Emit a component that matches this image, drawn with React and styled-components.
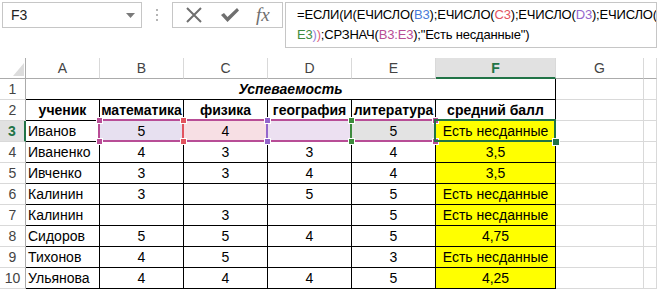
import styled, { createGlobalStyle } from 'styled-components';

const GRID = '#d9d9d9';
const HEAD_LINE = '#ababab';
const XL_GREEN = '#217346';
const ICON_GRAY = '#6f6f6f';

const COL_WIDTHS = [26, 74, 84, 84, 84, 84, 120, 88];
const COL_LETTERS = ['A', 'B', 'C', 'D', 'E', 'F', 'G'];
const ROW_H = 21;

// x of the line on the right of each column (0 = row header)
const EDGES = COL_WIDTHS.reduce((acc, w, i) => [...acc, (i ? acc[i - 1] + 1 : 0) + w - 1], []);
const rowEdge = r => (r + 1) * ROW_H - 1; // r = 0 -> header row

const HEADERS = ['ученик', 'математика', 'физика', 'география', 'литература', 'средний балл'];

const ROWS = [
	['Иванов', '5', '4', '', '5', 'Есть несданные'],
	['Иваненко', '4', '3', '3', '4', '3,5'],
	['Ивченко', '3', '3', '4', '4', '3,5'],
	['Калинин', '3', '', '5', '5', 'Есть несданные'],
	['Калинин', '', '3', '', '5', 'Есть несданные'],
	['Сидоров', '5', '5', '4', '5', '4,75'],
	['Тихонов', '4', '5', '', '3', 'Есть несданные'],
	['Ульянова', '4', '4', '4', '5', '4,25'],
];

// fills of the referenced cells in row 3 (B..E)
const REF_FILLS = ['#e7e0f0', '#f7dfe4', '#ece0f1', '#e3e3e3'];

const REFS = [
	{ from: 2, to: 2, color: '#4a7bd8' },
	{ from: 3, to: 3, color: '#e2545f' },
	{ from: 4, to: 4, color: '#9466cc' },
	{ from: 5, to: 5, color: '#3d8b3d' },
];
const RANGE = { from: 2, to: 5, color: '#b84d96' };

const GlobalStyle = createGlobalStyle`
	html, body {
		margin: 0;
		padding: 0;
		background: #fff;
	}
	body {
		font-family: 'Liberation Sans', Arial, sans-serif;
		overflow: hidden;
	}
`;

const Page = styled.div`
	width: 657px;
	height: 289px;
	overflow: hidden;
	background: #fff;
`;

const TopBar = styled.div`
	display: flex;
	align-items: flex-start;
	height: 58px;
	box-sizing: border-box;
	padding: 2px 0 0 2px;
`;

const NameBox = styled.div`
	box-sizing: border-box;
	width: 140px;
	height: 26px;
	border: 1px solid #c6c6c6;
	display: flex;
	align-items: center;
	justify-content: space-between;
	padding: 0 6px 0 8px;
	font-size: 14px;
	color: #222;
`;

const Grip = styled.div`
	width: 30px;
	height: 26px;
	display: flex;
	align-items: center;
	justify-content: center;
`;

const FxButtons = styled.div`
	box-sizing: border-box;
	width: 111px;
	height: 26px;
	border: 1px solid #c6c6c6;
	display: flex;
	align-items: center;
	justify-content: space-around;
	padding: 0 4px;
`;

const FxLabel = styled.span`
	font-family: 'Liberation Serif', 'Times New Roman', serif;
	font-style: italic;
	font-size: 19px;
	color: ${ICON_GRAY};
	line-height: 1;
	margin-top: -2px;
`;

const FormulaBox = styled.div`
	box-sizing: border-box;
	margin-left: 2px;
	width: 372px;
	height: 46px;
	border: 1px solid #c6c6c6;
	padding: 2px 0 0 11px;
	font-size: 13px;
	letter-spacing: -0.18px;
	line-height: 20px;
	color: #000;
	white-space: nowrap;
	overflow: hidden;
`;

const Ref = styled.span`
	color: ${p => p.$color};
`;

const Sheet = styled.div`
	position: relative;
	display: grid;
	grid-template-columns: ${COL_WIDTHS.map(w => w + 'px').join(' ')} 1fr;
	grid-auto-rows: ${ROW_H}px;
	font-size: 14px;
`;

const Corner = styled.div`
	box-sizing: border-box;
	border-right: 1px solid ${HEAD_LINE};
	border-bottom: 1px solid ${HEAD_LINE};
	display: flex;
	align-items: flex-end;
	justify-content: flex-end;
	padding: 0 1px 2px 0;
`;

const ColHead = styled.div`
	box-sizing: border-box;
	border-right: 1px solid ${GRID};
	border-bottom: ${p => (p.$active ? `2px solid ${XL_GREEN}` : `1px solid ${HEAD_LINE}`)};
	background: ${p => (p.$active ? '#e1e1e1' : '#fff')};
	color: ${p => (p.$active ? XL_GREEN : '#444')};
	font-weight: ${p => (p.$active ? 700 : 400)};
	display: flex;
	align-items: center;
	justify-content: center;
`;

const RowHead = styled.div`
	box-sizing: border-box;
	border-right: ${p => (p.$active ? `2px solid ${XL_GREEN}` : `1px solid ${HEAD_LINE}`)};
	border-bottom: 1px solid ${GRID};
	background: ${p => (p.$active ? '#e1e1e1' : '#fff')};
	color: ${p => (p.$active ? XL_GREEN : '#444')};
	font-weight: ${p => (p.$active ? 700 : 400)};
	display: flex;
	align-items: center;
	justify-content: center;
`;

const Cell = styled.div`
	box-sizing: border-box;
	border-right: 1px solid ${p => (p.$boxed ? '#000' : GRID)};
	border-bottom: 1px solid ${p => (p.$boxed ? '#000' : GRID)};
	background: ${p => p.$fill || '#fff'};
	display: flex;
	align-items: center;
	justify-content: ${p => (p.$left ? 'flex-start' : 'center')};
	padding: 0 2px;
	font-weight: ${p => (p.$bold ? 700 : 400)};
	white-space: nowrap;
	overflow: hidden;
	color: #000;
`;

const Title = styled(Cell)`
	grid-column: span 6;
	font-weight: 700;
	font-style: italic;
`;

const RefBox = styled.div`
	position: absolute;
	box-sizing: border-box;
	left: ${p => p.$x - 1}px;
	top: ${p => p.$y - 1}px;
	width: ${p => p.$w + 2}px;
	height: ${p => p.$h + 2}px;
	border: 2px solid ${p => p.$color};
	pointer-events: none;
`;

const Handle = styled.div`
	position: absolute;
	left: ${p => p.$x - 2}px;
	top: ${p => p.$y - 2}px;
	width: ${p => p.$size}px;
	height: ${p => p.$size}px;
	background: ${p => p.$color};
	box-shadow: 0 0 0 1px #fff;
`;

function Formula() {
	return (
		<FormulaBox>
			=ЕСЛИ(И(ЕЧИСЛО(<Ref $color="#4a7bd8">B3</Ref>);ЕЧИСЛО(<Ref $color="#e2545f">C3</Ref>);ЕЧИСЛО(
			<Ref $color="#9466cc">D3</Ref>);ЕЧИСЛО(
			<br />
			<Ref $color="#3d8b3d">E3</Ref>
			<Ref $color="#9a7fd8">)</Ref>
			<Ref $color="#e2607a">)</Ref>;СРЗНАЧ(<Ref $color="#b84d96">B3:E3</Ref>);"Есть несданные")
		</FormulaBox>
	);
}

function Corners({ from, to, color, size = 5 }) {
	const x1 = EDGES[from - 1];
	const x2 = EDGES[to];
	const y1 = rowEdge(2);
	const y2 = rowEdge(3);
	return (
		<>
			<Handle $x={x1} $y={y1} $size={size} $color={color} />
			<Handle $x={x2} $y={y1} $size={size} $color={color} />
			<Handle $x={x1} $y={y2} $size={size} $color={color} />
			<Handle $x={x2} $y={y2} $size={size} $color={color} />
		</>
	);
}

function RangeOutline({ from, to, color }) {
	const x1 = EDGES[from - 1];
	const x2 = EDGES[to];
	return <RefBox $x={x1} $y={rowEdge(2)} $w={x2 - x1} $h={ROW_H} $color={color} />;
}

export default function App() {
	return (
		<Page>
			<GlobalStyle />
			<TopBar>
				<NameBox>
					<span>F3</span>
					<svg width="9" height="5" viewBox="0 0 9 5">
						<path d="M0 0 H9 L4.5 5 Z" fill="#7a7a7a" />
					</svg>
				</NameBox>
				<Grip>
					<svg width="3" height="13" viewBox="0 0 3 13">
						<rect x="0" y="0" width="2" height="2" fill="#b5b5b5" />
						<rect x="0" y="5" width="2" height="2" fill="#b5b5b5" />
						<rect x="0" y="10" width="2" height="2" fill="#b5b5b5" />
					</svg>
				</Grip>
				<FxButtons>
					<svg width="18" height="16" viewBox="0 0 18 16">
						<path d="M2 1 L16 15 M16 1 L2 15" stroke={ICON_GRAY} strokeWidth="2" fill="none" />
					</svg>
					<svg width="20" height="16" viewBox="0 0 20 16">
						<path d="M1 8 L4 6 L7.5 10 L17 1 L19 3.5 L7.5 15 Z" fill={ICON_GRAY} />
					</svg>
					<FxLabel>fx</FxLabel>
				</FxButtons>
				<Formula />
			</TopBar>

			<Sheet>
				<Corner>
					<svg width="11" height="13" viewBox="0 0 11 13">
						<path d="M11 0 V13 H0 Z" fill="#dcdcdc" />
					</svg>
				</Corner>
				{COL_LETTERS.map(l => (
					<ColHead key={l} $active={l === 'F'}>
						{l}
					</ColHead>
				))}
				<ColHead />

				<RowHead>1</RowHead>
				<Title $boxed>Успеваемость</Title>
				<Cell />
				<Cell />

				<RowHead>2</RowHead>
				{HEADERS.map(h => (
					<Cell key={h} $boxed $bold>
						{h}
					</Cell>
				))}
				<Cell />
				<Cell />

				{ROWS.map((row, r) => (
					<Row key={r} num={r + 3} row={row} />
				))}

				{REFS.map(ref => (
					<RangeOutline key={ref.from} {...ref} />
				))}
				<RangeOutline {...RANGE} />
				{REFS.map(ref => (
					<Corners key={ref.from} {...ref} />
				))}
				<Corners {...RANGE} />

				<RefBox $x={EDGES[5]} $y={rowEdge(2)} $w={EDGES[6] - EDGES[5]} $h={ROW_H} $color={XL_GREEN} />
				<Handle $x={EDGES[6]} $y={rowEdge(3)} $size={6} $color={XL_GREEN} />
			</Sheet>
		</Page>
	);
}

function Row({ num, row }) {
	const active = num === 3;
	return (
		<>
			<RowHead $active={active}>{num}</RowHead>
			{row.map((v, i) => (
				<Cell
					key={i}
					$boxed
					$left={i === 0}
					$fill={i === 5 ? '#ffff00' : active && i > 0 ? REF_FILLS[i - 1] : undefined}
				>
					{v}
				</Cell>
			))}
			<Cell />
			<Cell />
		</>
	);
}
